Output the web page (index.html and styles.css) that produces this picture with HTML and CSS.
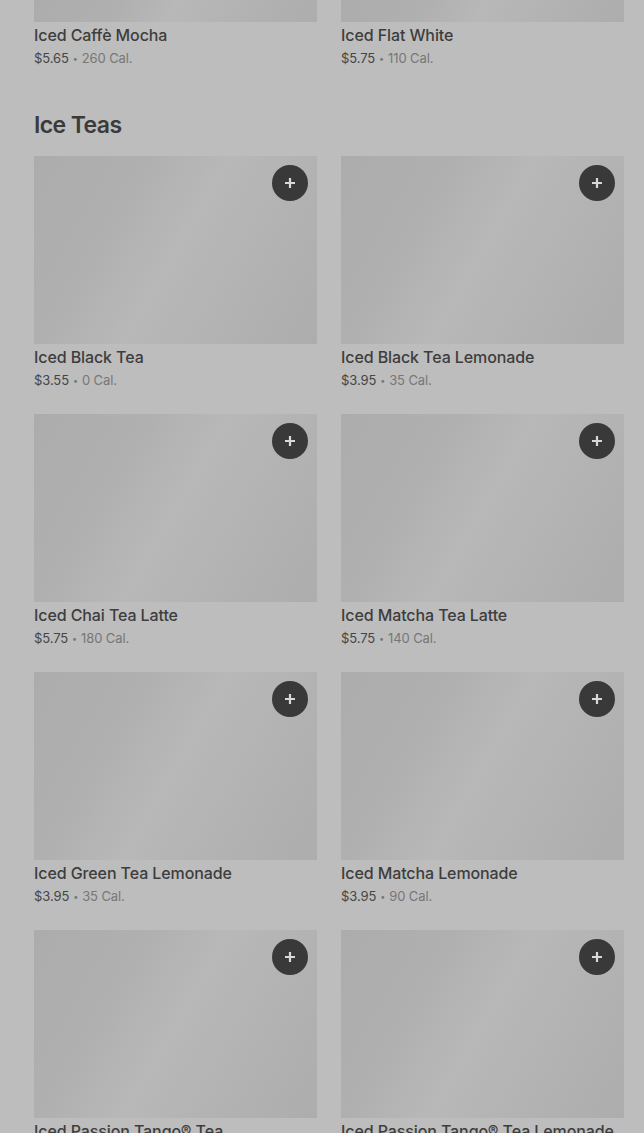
FILE: index.html
```html
<!DOCTYPE html>
<html>
<head>
<meta charset="utf-8">
<link rel="stylesheet" href="styles.css">
</head>
<body>
<div class="page">
  <div class="grid top">
    <div class="card">
      <div class="thumb short"></div>
      <div class="name">Iced Caffè Mocha</div>
      <div class="meta"><span class="price">$5.65</span><span class="dot">•</span>260 Cal.</div>
    </div>
    <div class="card">
      <div class="thumb short"></div>
      <div class="name">Iced Flat White</div>
      <div class="meta"><span class="price">$5.75</span><span class="dot">•</span>110 Cal.</div>
    </div>
  </div>

  <h2 class="section">Ice Teas</h2>

  <div class="grid">
    <div class="card">
      <div class="thumb"><span class="add"><svg viewBox="0 0 14 14"><path d="M7 2v10M2 7h10"/></svg></span></div>
      <div class="name">Iced Black Tea</div>
      <div class="meta"><span class="price">$3.55</span><span class="dot">•</span>0 Cal.</div>
    </div>
    <div class="card">
      <div class="thumb"><span class="add"><svg viewBox="0 0 14 14"><path d="M7 2v10M2 7h10"/></svg></span></div>
      <div class="name">Iced Black Tea Lemonade</div>
      <div class="meta"><span class="price">$3.95</span><span class="dot">•</span>35 Cal.</div>
    </div>
    <div class="card">
      <div class="thumb"><span class="add"><svg viewBox="0 0 14 14"><path d="M7 2v10M2 7h10"/></svg></span></div>
      <div class="name">Iced Chai Tea Latte</div>
      <div class="meta"><span class="price">$5.75</span><span class="dot">•</span>180 Cal.</div>
    </div>
    <div class="card">
      <div class="thumb"><span class="add"><svg viewBox="0 0 14 14"><path d="M7 2v10M2 7h10"/></svg></span></div>
      <div class="name">Iced Matcha Tea Latte</div>
      <div class="meta"><span class="price">$5.75</span><span class="dot">•</span>140 Cal.</div>
    </div>
    <div class="card">
      <div class="thumb"><span class="add"><svg viewBox="0 0 14 14"><path d="M7 2v10M2 7h10"/></svg></span></div>
      <div class="name">Iced Green Tea Lemonade</div>
      <div class="meta"><span class="price">$3.95</span><span class="dot">•</span>35 Cal.</div>
    </div>
    <div class="card">
      <div class="thumb"><span class="add"><svg viewBox="0 0 14 14"><path d="M7 2v10M2 7h10"/></svg></span></div>
      <div class="name">Iced Matcha Lemonade</div>
      <div class="meta"><span class="price">$3.95</span><span class="dot">•</span>90 Cal.</div>
    </div>
    <div class="card">
      <div class="thumb"><span class="add"><svg viewBox="0 0 14 14"><path d="M7 2v10M2 7h10"/></svg></span></div>
      <div class="name">Iced Passion Tango® Tea</div>
      <div class="meta"><span class="price">$3.55</span><span class="dot">•</span>0 Cal.</div>
    </div>
    <div class="card">
      <div class="thumb"><span class="add"><svg viewBox="0 0 14 14"><path d="M7 2v10M2 7h10"/></svg></span></div>
      <div class="name">Iced Passion Tango® Tea Lemonade</div>
      <div class="meta"><span class="price">$3.95</span><span class="dot">•</span>35 Cal.</div>
    </div>
  </div>
</div>
</body>
</html>
```
FILE: styles.css
```css
html, body {
  margin: 0;
  padding: 0;
  background: #bdbdbd;
  overflow: hidden;
}
body {
  font-family: Inter, "Liberation Sans", sans-serif;
  color: #3b3b3b;
}
.page {
  padding: 0 20px 0 34px;
  height: 1133px;
  overflow: hidden;
}
.grid {
  display: grid;
  grid-template-columns: 283px 283px;
  column-gap: 24px;
  row-gap: 23px;
}
.card {
  display: flex;
  flex-direction: column;
}
.thumb {
  position: relative;
  height: 188px;
  background: linear-gradient(120deg, #acacac 0%, #b0b0b0 30%, #b8b8b8 50%, #b3b3b3 70%, #adadad 100%);
}
.thumb.short {
  height: 22px;
}
.add {
  position: absolute;
  top: 9px;
  right: 9px;
  width: 36px;
  height: 36px;
  border-radius: 50%;
  background: #393939;
  display: flex;
  align-items: center;
  justify-content: center;
}
.add svg {
  width: 14px;
  height: 14px;
  stroke: #d8d8d8;
  stroke-width: 2.2;
  fill: none;
}
.name {
  margin-top: 2px;
  font-size: 16px;
  font-weight: 500;
  line-height: 22px;
  color: #3d3d3d;
  letter-spacing: -0.1px;
}
.meta {
  margin-top: 2px;
  font-size: 13px;
  line-height: 20px;
  color: #777;
  letter-spacing: -0.1px;
}
.price {
  color: #454545;
}
.dot {
  font-size: 9px;
  margin: 0 4px;
  vertical-align: 1px;
}
.section {
  margin: 40px 0 15px;
  font-size: 23px;
  font-weight: 600;
  line-height: 32px;
  color: #3a3a3a;
  letter-spacing: -0.6px;
}
```
